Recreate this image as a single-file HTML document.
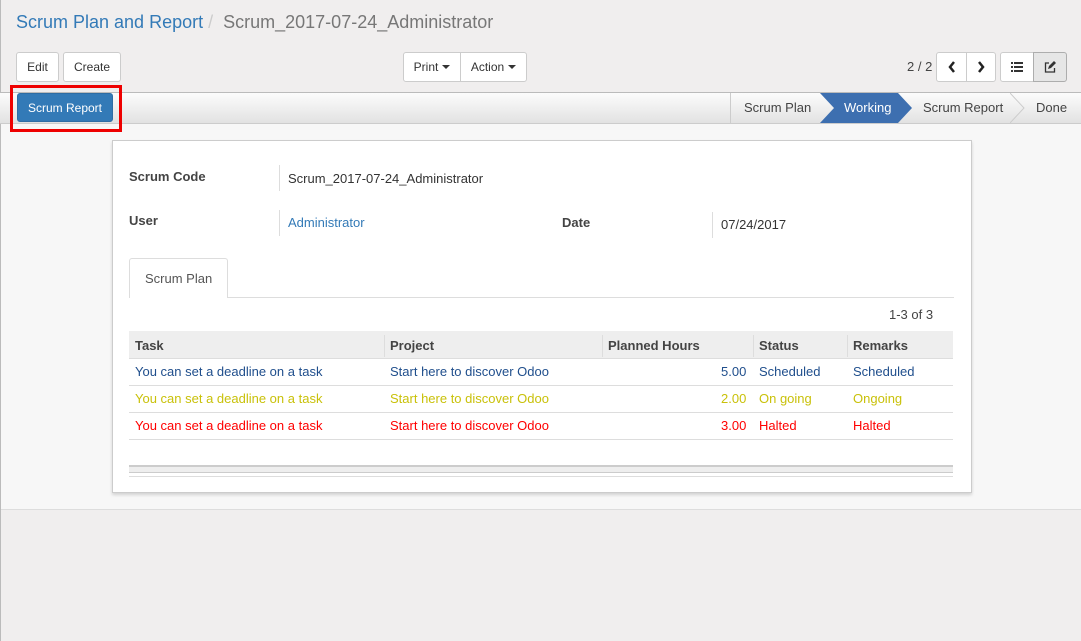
<!DOCTYPE html>
<html><head><meta charset="utf-8"><style>
*{box-sizing:border-box;margin:0;padding:0}
body{width:1081px;height:641px;overflow:hidden;background:#f0eeee;font-family:"Liberation Sans",sans-serif;font-size:13px;color:#4c4c4c;position:relative}
.a{position:absolute}
.btn{position:absolute;height:30px;background:#fff;border:1px solid #ccc;border-radius:3px;font-size:12px;color:#333;display:flex;align-items:center;justify-content:center}
.car{display:inline-block;width:0;height:0;border-left:4px solid transparent;border-right:4px solid transparent;border-top:4px solid #333;margin-left:4px}
.td{position:absolute;font-size:13px}
</style></head><body>
<div class="a" style="left:0;top:0;width:1px;height:641px;background:#bbb"></div>
<div class="a" style="left:16px;top:12px;font-size:18px;color:#337ab7">Scrum Plan and Report <span style="color:#ccc">/</span> <span style="color:#777">&nbsp;Scrum_2017-07-24_Administrator</span></div>
<div class="btn" style="left:16px;top:52px;width:43px">Edit</div>
<div class="btn" style="left:63px;top:52px;width:58px">Create</div>
<div class="btn" style="left:403px;top:52px;width:58px;border-radius:3px 0 0 3px">Print<span class="car"></span></div>
<div class="btn" style="left:460px;top:52px;width:67px;border-radius:0 3px 3px 0">Action<span class="car"></span></div>
<div class="a" style="left:907px;top:59px;font-size:13px;color:#444">2 / 2</div>
<div class="btn" style="left:936px;top:52px;width:31px;border-radius:3px 0 0 3px"><svg width="8" height="12"><path d="M6 1L2 6l4 5" fill="none" stroke="#222" stroke-width="2.5"/></svg></div>
<div class="btn" style="left:966px;top:52px;width:30px;border-radius:0 3px 3px 0"><svg width="8" height="12"><path d="M2 1l4 5-4 5" fill="none" stroke="#222" stroke-width="2.5"/></svg></div>
<div class="btn" style="left:1000px;top:52px;width:34px;border-radius:3px 0 0 3px">
<svg width="12" height="10"><g fill="#333"><rect x="0" y="0" width="2" height="2"/><rect x="3" y="0" width="9" height="2"/><rect x="0" y="4" width="2" height="2"/><rect x="3" y="4" width="9" height="2"/><rect x="0" y="8" width="2" height="2"/><rect x="3" y="8" width="9" height="2"/></g></svg></div>
<div class="btn" style="left:1033px;top:52px;width:34px;border-radius:0 3px 3px 0;background:#e6e6e6;border-color:#adadad">
<svg width="12" height="12"><path d="M5 2H1.5v9h9V7" fill="none" stroke="#333" stroke-width="1.3"/><path d="M4 8l1-3 5-5 2 2-5 5z" fill="#333"/></svg></div>
<div class="a" style="left:0;top:92px;width:1081px;height:32px;background:linear-gradient(#fcfcfc,#e2e2e2);border-top:1px solid #bbb;border-bottom:1px solid #ccc"></div>
<div class="a" style="left:17px;top:93px;width:96px;height:29px;background:#337ab7;border:1px solid #2e6da4;border-radius:3px;color:#fff;font-size:12px;display:flex;align-items:center;justify-content:center">Scrum Report</div>
<div class="a" style="left:730px;top:93px;width:1px;height:30px;background:#ccc"></div>
<div class="a" style="left:744px;top:100px;font-size:13px;color:#444">Scrum Plan</div>
<svg class="a" style="left:820px;top:93px" width="100" height="30"><path d="M0 0H78L92 15 78 30H0L14 15z" fill="#3d6fb0"/></svg>
<div class="a" style="left:844px;top:100px;font-size:13px;color:#fff">Working</div>
<div class="a" style="left:923px;top:100px;font-size:13px;color:#444">Scrum Report</div>
<svg class="a" style="left:1010px;top:93px" width="20" height="30"><path d="M0 0L14 15 0 30" fill="none" stroke="#ccc"/></svg>
<div class="a" style="left:1036px;top:100px;font-size:13px;color:#444">Done</div>
<div class="a" style="left:1px;top:124px;width:1080px;height:386px;background:#f7f7f7;border-bottom:1px solid #ddd"></div>
<div class="a" style="left:10px;top:85px;width:112px;height:47px;border:3px solid #e00"></div>
<div class="a" style="left:112px;top:140px;width:860px;height:353px;background:#fff;border:1px solid #ccc;box-shadow:0 2px 3px rgba(0,0,0,.15)"></div>
<div class="td" style="left:129px;top:169px;font-weight:bold;color:#444">Scrum Code</div>
<div class="a" style="left:279px;top:165px;width:1px;height:26px;background:#ddd"></div>
<div class="td" style="left:288px;top:171px;color:#333">Scrum_2017-07-24_Administrator</div>
<div class="td" style="left:129px;top:213px;font-weight:bold;color:#444">User</div>
<div class="a" style="left:279px;top:210px;width:1px;height:26px;background:#ddd"></div>
<div class="td" style="left:288px;top:215px;color:#337ab7">Administrator</div>
<div class="td" style="left:562px;top:215px;font-weight:bold;color:#444">Date</div>
<div class="a" style="left:712px;top:212px;width:1px;height:26px;background:#ddd"></div>
<div class="td" style="left:721px;top:217px;color:#333">07/24/2017</div>
<div class="a" style="left:129px;top:297px;width:825px;height:1px;background:#ddd"></div>
<div class="a" style="left:129px;top:258px;width:99px;height:40px;background:#fff;border:1px solid #ddd;border-bottom:none;border-radius:3px 3px 0 0"></div>
<div class="td" style="left:145px;top:271px;color:#555">Scrum Plan</div>
<div class="td" style="left:889px;top:307px;color:#444">1-3 of 3</div>
<div class="a" style="left:129px;top:331px;width:824px;height:28px;background:#eee;border-bottom:1px solid #ddd"></div>
<div class="a" style="left:384px;top:335px;width:1px;height:22px;background:#ddd"></div>
<div class="a" style="left:602px;top:335px;width:1px;height:22px;background:#ddd"></div>
<div class="a" style="left:753px;top:335px;width:1px;height:22px;background:#ddd"></div>
<div class="a" style="left:847px;top:335px;width:1px;height:22px;background:#ddd"></div>
<div class="td" style="left:135px;top:338px;font-weight:bold;color:#444">Task</div>
<div class="td" style="left:390px;top:338px;font-weight:bold;color:#444">Project</div>
<div class="td" style="left:608px;top:338px;font-weight:bold;color:#444">Planned Hours</div>
<div class="td" style="left:759px;top:338px;font-weight:bold;color:#444">Status</div>
<div class="td" style="left:853px;top:338px;font-weight:bold;color:#444">Remarks</div>
<div class="a" style="left:129px;top:385px;width:824px;height:1px;background:#ddd"></div>
<div class="a" style="left:129px;top:412px;width:824px;height:1px;background:#ddd"></div>
<div class="a" style="left:129px;top:439px;width:824px;height:1px;background:#ddd"></div>
<div style="color:#1f4e8c">
<div class="td" style="left:135px;top:364px">You can set a deadline on a task</div>
<div class="td" style="left:390px;top:364px">Start here to discover Odoo</div>
<div class="td" style="left:721px;top:364px">5.00</div>
<div class="td" style="left:759px;top:364px">Scheduled</div>
<div class="td" style="left:853px;top:364px">Scheduled</div></div>
<div style="color:#c9c10a">
<div class="td" style="left:135px;top:391px">You can set a deadline on a task</div>
<div class="td" style="left:390px;top:391px">Start here to discover Odoo</div>
<div class="td" style="left:721px;top:391px">2.00</div>
<div class="td" style="left:759px;top:391px">On going</div>
<div class="td" style="left:853px;top:391px">Ongoing</div></div>
<div style="color:#f00">
<div class="td" style="left:135px;top:418px">You can set a deadline on a task</div>
<div class="td" style="left:390px;top:418px">Start here to discover Odoo</div>
<div class="td" style="left:721px;top:418px">3.00</div>
<div class="td" style="left:759px;top:418px">Halted</div>
<div class="td" style="left:853px;top:418px">Halted</div></div>
<div class="a" style="left:129px;top:465px;width:824px;height:8px;background:#eee;border-top:2px solid #ccc;border-bottom:1px solid #ccc"></div>
<div class="a" style="left:129px;top:476px;width:824px;height:1px;background:#ddd"></div>
</body></html>
